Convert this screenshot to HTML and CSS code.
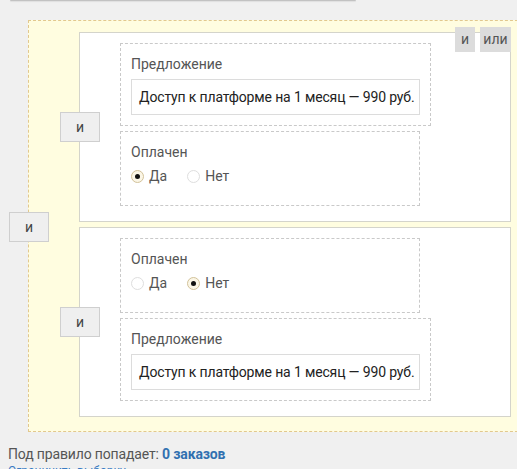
FILE: index.html
```html
<!DOCTYPE html>
<html lang="ru">
<head>
<meta charset="utf-8">
<title>Правило</title>
<link rel="stylesheet" href="styles.css">
</head>
<body>
<div class="page">
  <div class="topline"></div>

  <div class="group group-outer">
    <button class="join join-outer">и</button>
    <div class="mode">
      <span class="mode-btn mode-and">и</span>
      <span class="mode-btn mode-or">или</span>
    </div>

    <div class="block">
      <button class="join">и</button>
      <div class="cond cond-offer">
        <div class="cond-label">Предложение</div>
        <div class="field">Доступ к платформе на 1 месяц — 990 руб.</div>
      </div>
      <div class="cond cond-paid">
        <div class="cond-label">Оплачен</div>
        <div class="radios">
          <label class="radio"><span class="dot checked"></span>Да</label>
          <label class="radio"><span class="dot"></span>Нет</label>
        </div>
      </div>
    </div>

    <div class="block">
      <button class="join">и</button>
      <div class="cond cond-paid">
        <div class="cond-label">Оплачен</div>
        <div class="radios">
          <label class="radio"><span class="dot"></span>Да</label>
          <label class="radio"><span class="dot checked"></span>Нет</label>
        </div>
      </div>
      <div class="cond cond-offer">
        <div class="cond-label">Предложение</div>
        <div class="field">Доступ к платформе на 1 месяц — 990 руб.</div>
      </div>
    </div>
  </div>

  <div class="footer">
    <div class="result">Под правило попадает: <a class="count" href="#">0 заказов</a></div>
    <a class="limit" href="#">Ограничить выборку</a>
  </div>
</div>
</body>
</html>
```

FILE: styles.css
```css
html, body {
  margin: 0;
  padding: 0;
  background: #f0f0f0;
}

.page {
  width: 517px;
  height: 469px;
  overflow: hidden;
  font-family: Roboto, "Liberation Sans", Arial, sans-serif;
  font-size: 14px;
  color: #555;
}

.topline {
  margin-left: 10px;
  width: 346px;
  height: 1px;
  background: #c2c2c2;
  border-radius: 0 0 2px 2px;
  box-shadow: 0 1px 1px rgba(0, 0, 0, 0.08);
}

.group-outer {
  position: relative;
  margin: 19px -11px 0 28px;
  padding: 11px 16px 14px 50px;
  border: 1px dashed #e2c88e;
  background: #fffde0;
  display: flex;
  flex-direction: column;
  gap: 5px;
}

.join {
  position: absolute;
  left: -20px;
  top: 50%;
  transform: translateY(-50%);
  width: 40px;
  height: 30px;
  margin: 0;
  padding: 0;
  border: 1px solid #cfcfcf;
  background: #efefef;
  color: #444;
  font-family: inherit;
  font-size: 14px;
  line-height: 28px;
  text-align: center;
}

.join-outer {
  margin-top: 1px;
}

.mode {
  position: absolute;
  top: 6px;
  right: 16px;
  display: flex;
  gap: 5px;
  z-index: 2;
}

.mode-btn {
  height: 25px;
  line-height: 25px;
  background: #dcdcdc;
  color: #555;
  text-align: center;
}

.mode-and { width: 20px; }
.mode-or { width: 31px; }

.block {
  position: relative;
  background: #fff;
  border: 1px solid #d4d4cb;
  padding: 10px 0 15px 40px;
  display: flex;
  flex-direction: column;
  align-items: flex-start;
  gap: 5px;
}

.cond {
  box-sizing: border-box;
  border: 1px dashed #c9c9c9;
  padding: 10px 10px 10px;
}

.cond-offer { width: 311px; }
.cond-paid { width: 300px; padding-bottom: 19px; }

.cond-label {
  line-height: 20px;
  height: 20px;
  color: #555;
  margin-bottom: 5px;
}

.cond-paid .cond-label {
  margin-bottom: 4px;
}

.field {
  box-sizing: border-box;
  height: 36px;
  line-height: 34px;
  border: 1px solid #dcdcdc;
  padding: 0 7px;
  color: #222;
  letter-spacing: -0.15px;
  white-space: nowrap;
  overflow: hidden;
}

.radios {
  display: flex;
  height: 20px;
  line-height: 20px;
  gap: 20px;
}

.radio {
  display: flex;
  align-items: center;
  gap: 5px;
  color: #555;
}

.dot {
  box-sizing: border-box;
  width: 13px;
  height: 13px;
  border-radius: 50%;
  border: 1px solid #dedede;
  background: #fff;
  position: relative;
  margin-top: 1px;
}

.dot.checked {
  border-color: #d2c29a;
  background: #fbf6e6;
}

.dot.checked::after {
  content: "";
  position: absolute;
  left: 3px;
  top: 3px;
  width: 5px;
  height: 5px;
  border-radius: 50%;
  background: #111;
}

.footer {
  padding: 12px 8px 0;
}

.result {
  line-height: 20px;
  color: #555;
  letter-spacing: -0.15px;
}

.count {
  color: #3170b0;
  font-weight: bold;
  text-decoration: none;
}

.limit {
  display: block;
  font-size: 12px;
  line-height: 14px;
  color: #3a7cc4;
  text-decoration: none;
}
```
